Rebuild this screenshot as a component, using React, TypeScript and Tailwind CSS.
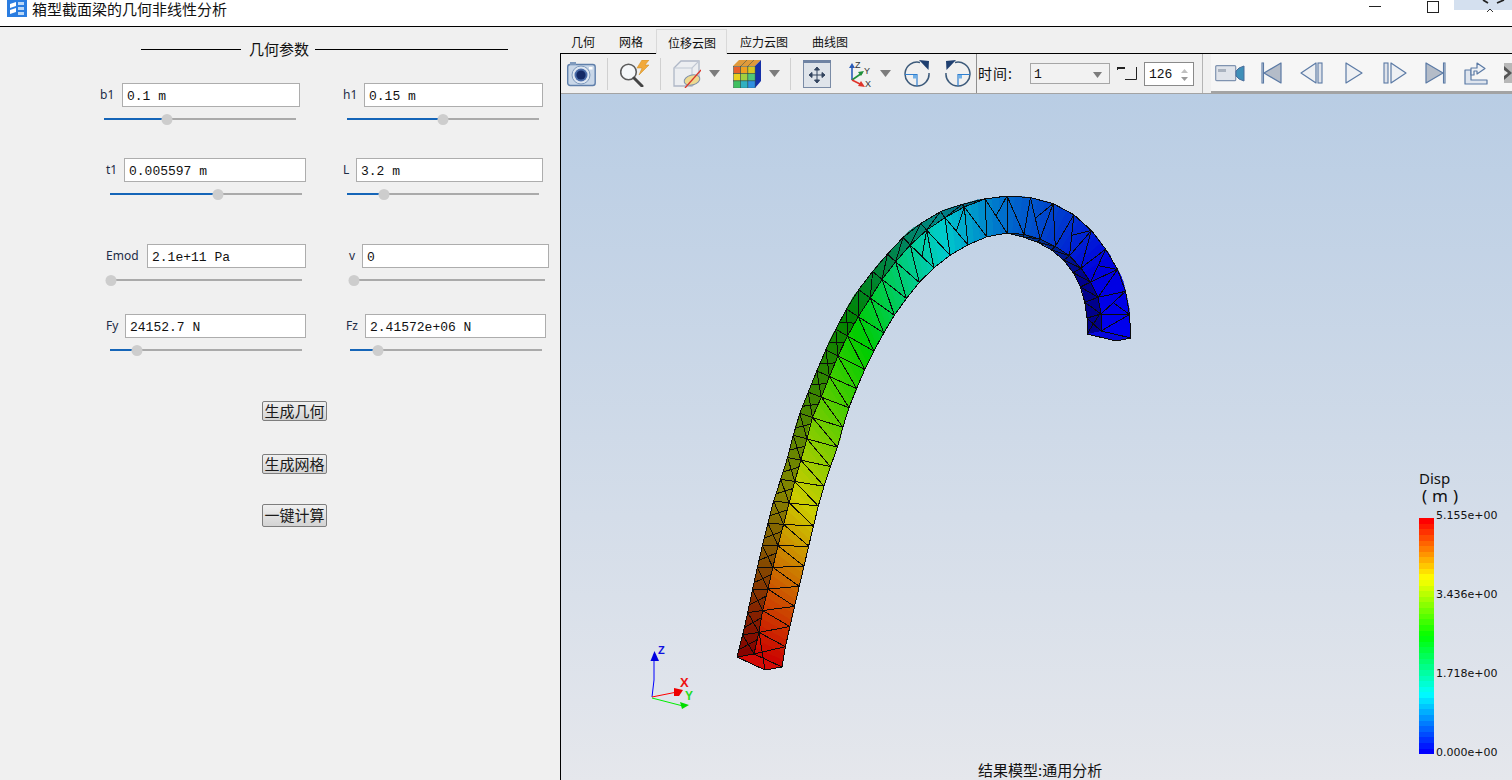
type Pt = [number, number];

// --- beam geometry, traced from the picture (page coordinates) ---
const frontOuterA: Pt[] = [[754,654],[759,632],[763,608],[769,585],[774,562],[780,538],[786,515],[792,492],[798,469],[806,444],[810,423],[819,403],[828,380],[837,358],[847,337],[858,317],[871,297],[883,278],[897,260],[912,243],[928,229],[946,217],[964,207],[985,199],[1007,196]];
const frontOuterB: Pt[] = [[1007,196],[1028,197],[1052,203],[1073,214],[1093,232],[1110,255],[1123,280],[1129,307],[1131,338]];
const frontInnerA: Pt[] = [[782,667],[786,643],[791,622],[796,600],[802,575],[807,553],[813,528],[818,507],[825,483],[832,462],[840,440],[845,418],[853,397],[861,378],[870,358],[881,338],[891,320],[903,303],[915,287],[928,273],[943,260],[958,250],[975,241],[992,235],[1007,233]];
const frontInnerB: Pt[] = [[1007,233],[1030,235],[1050,243],[1073,258],[1088,277],[1098,297],[1101,312],[1101,331]];
const sideLeft: Pt[] = [[737,657],[745,626],[753,587],[763,543],[773,503],[787,460],[792,440],[798,418],[813,380],[830,340],[853,297],[880,262],[910,230],[943,210],[977,200],[1007,196]];
const sideInner: Pt[] = [[1007,233],[1023,237],[1045,245],[1062,258],[1075,275],[1083,293],[1087,313],[1087,334]];

function resample(points: Pt[], n: number): Pt[] {
  const lens = [0];
  for (let i = 1; i < points.length; i++) {
    lens.push(lens[i - 1] + Math.hypot(points[i][0] - points[i - 1][0], points[i][1] - points[i - 1][1]));
  }
  const total = lens[lens.length - 1];
  const out: Pt[] = [];
  for (let k = 0; k <= n; k++) {
    const d = (k / n) * total;
    let i = 1;
    while (i < points.length - 1 && lens[i] < d) i++;
    const f = (d - lens[i - 1]) / (lens[i] - lens[i - 1]);
    out.push([
      points[i - 1][0] + (points[i][0] - points[i - 1][0]) * f,
      points[i - 1][1] + (points[i][1] - points[i - 1][1]) * f,
    ]);
  }
  return out;
}

// blue -> cyan -> green -> yellow -> red
function ramp(u: number, shade = 1) {
  const stops = [[0,0,255],[0,255,255],[0,255,0],[255,255,0],[255,0,0]];
  const x = Math.min(0.9999, Math.max(0, u)) * 4;
  const i = Math.floor(x);
  const f = x - i;
  const c = stops[i].map((v, k) => Math.round((v + (stops[i + 1][k] - v) * f) * shade));
  return `rgb(${c[0]},${c[1]},${c[2]})`;
}

// displacement along the beam is not linear in arc length
const dispStops: Pt[] = [[0,1],[0.22,0.75],[0.46,0.5],[0.64,0.25],[0.735,0.13],[0.9,0],[1,0]];
function dispAt(t: number) {
  let i = 1;
  while (i < dispStops.length - 1 && dispStops[i][0] < t) i++;
  const [t0, u0] = dispStops[i - 1];
  const [t1, u1] = dispStops[i];
  return u0 + ((t - t0) / (t1 - t0)) * (u1 - u0);
}

const CELLS_A = 25;
const CELLS_B = 9;
const CELLS = CELLS_A + CELLS_B;
const SUB = 3;

const fo = [...resample(frontOuterA, CELLS_A * SUB), ...resample(frontOuterB, CELLS_B * SUB).slice(1)];
const fi = [...resample(frontInnerA, CELLS_A * SUB), ...resample(frontInnerB, CELLS_B * SUB).slice(1)];
const sl = resample(sideLeft, CELLS_A * SUB);
const si = resample(sideInner, CELLS_B * SUB);

const poly = (pts: Pt[]) => pts.map((p) => p.join(",")).join(" ");

function Beam() {
  const strips: React.ReactNode[] = [];
  const lines: [Pt, Pt][] = [];
  const total = CELLS * SUB;

  for (let k = 0; k < CELLS_A * SUB; k++) {
    const c = ramp(dispAt((k + 0.5) / total), 0.52);
    strips.push(<polygon key={`s${k}`} points={poly([sl[k], sl[k + 1], fo[k + 1], fo[k]])} fill={c} stroke={c} strokeWidth={0.6} />);
  }
  for (let k = 0; k < CELLS_B * SUB; k++) {
    const c = ramp(dispAt((CELLS_A * SUB + k + 0.5) / total), 0.55);
    const j = CELLS_A * SUB + k;
    strips.push(<polygon key={`i${k}`} points={poly([si[k], si[k + 1], fi[j + 1], fi[j]])} fill={c} stroke={c} strokeWidth={0.6} />);
  }
  for (let k = 0; k < total; k++) {
    const t = (k + 0.5) / total;
    const c = ramp(dispAt(t), t < 0.8 ? 0.8 : 0.8 + (t - 0.8) * 0.7);
    strips.push(<polygon key={`f${k}`} points={poly([fo[k], fo[k + 1], fi[k + 1], fi[k]])} fill={c} stroke={c} strokeWidth={0.6} />);
  }

  for (let n = 0; n < CELLS; n++) {
    const a = n * SUB;
    const b = (n + 1) * SUB;
    lines.push([fo[a], fi[a]], [fo[a], fi[b]], [fo[a], fo[b]], [fi[a], fi[b]]);
    if (n >= 19 && n % 2 === 0) {
      const mid: Pt = [(fo[a][0] + fi[b][0]) / 2, (fo[a][1] + fi[b][1]) / 2];
      lines.push([fo[b], mid]);
    }
  }
  lines.push([fo[total], fi[total]]);
  for (let n = 0; n < CELLS_A; n++) {
    const a = n * SUB;
    const b = (n + 1) * SUB;
    lines.push([sl[a], fo[a]], [sl[a], sl[b]], [sl[b], fo[a]]);
    if (n < 16) lines.push([sl[a + 1], fo[a + 2]]);
  }
  for (let n = 0; n < CELLS_B; n++) {
    const a = n * SUB;
    const b = (n + 1) * SUB;
    const j = CELLS_A * SUB + a;
    lines.push([si[a], fi[j]], [si[a], si[b]], [si[a], fi[j + SUB]]);
  }

  return (
    <svg width={951} height={686} viewBox="561 94 951 686" className="absolute top-0 left-0">
      <g shapeRendering="crispEdges">
        {strips}
        <polygon points="737,657 754,654 782,667 765,670" fill="#d40a06" />
        <polygon points="1087,334 1101,331 1131,338 1116,341" fill="#0606dc" />
      </g>
      <g stroke="#0b0b0b" strokeWidth={1} shapeRendering="crispEdges" fill="none">
        {lines.map(([p, q], i) => (
          <line key={i} x1={p[0]} y1={p[1]} x2={q[0]} y2={q[1]} />
        ))}
        <polyline points="737,657 754,654 782,667 765,670 737,657" />
        <polyline points="759,632 765,670" />
        <polyline points="759,632 754,654" />
        <polyline points="1087,334 1116,341 1131,338" />
        <polyline points="1101,312 1087,334" />
      </g>

      {/* axis triad */}
      <g strokeWidth={1} fill="none">
        <polyline points="652,697 654,680 654,654" stroke="#0000ff" />
        <polygon points="654.5,651 650.5,661 659,661" fill="#0000e0" />
        <line x1={652} y1={697} x2={677} y2={692} stroke="#ff0000" />
        <polygon points="674,688 683,690 679,696 674,696" fill="#ee0000" />
        <line x1={652} y1={698} x2={683} y2={706} stroke="#00ee00" />
        <polygon points="680,702 689,705 682,709" fill="#00dd00" />
      </g>
      <text x={658} y={654} fontSize={11} fontWeight={700} fill="#1010e0" fontFamily="Liberation Sans, sans-serif">Z</text>
      <text x={680} y={687} fontSize={13} fontWeight={700} fill="#ee1111" fontFamily="Liberation Sans, sans-serif">X</text>
      <text x={685} y={700} fontSize={12} fontWeight={700} fill="#22dd22" fontFamily="Liberation Sans, sans-serif">Y</text>
    </svg>
  );
}

function Legend() {
  const bands = Array.from({ length: 42 }, (_, i) => ramp(1 - i / 41));
  return (
    <div className="absolute top-[424px] left-[858px] flex h-[236px] w-[15px] flex-col">
      {bands.map((c, i) => (
        <div key={i} className="flex-1" style={{ background: c }} />
      ))}
    </div>
  );
}

// --- form ---
type FieldProps = {
  label: string;
  value: string;
  className: string;
  inputClass: string;
  sliderClass: string;
  thumb: number;
};

function Field({ label, value, className, inputClass, sliderClass, thumb }: FieldProps) {
  return (
    <div className={className}>
      <div className="flex h-6 items-center justify-between">
        <span className="font-['Noto_Sans','Liberation_Sans',sans-serif] text-[12px] text-[#1d2c46]">{label}</span>
        <div className={`flex h-6 items-center border border-[#adadad] bg-white pt-[3px] pl-[4px] font-['Liberation_Mono',monospace] text-[13px] text-[#111] ${inputClass}`}>
          {value}
        </div>
      </div>
      <div className={`relative mt-[7px] flex h-[10px] items-center ${sliderClass}`}>
        <div className="h-[2px] w-full bg-[#aaaaaa]" />
        <div className="absolute top-[4px] left-0 h-[2px] bg-[#1565b8]" style={{ width: thumb }} />
        <div className="absolute top-0 h-[11px] w-[11px] -translate-x-1/2 rounded-full bg-[#cdcdcd]" style={{ left: thumb }} />
      </div>
    </div>
  );
}

function ActionButton({ children, className }: { children: string; className: string }) {
  return (
    <button className={`ml-[262px] flex w-[65px] items-center justify-center rounded-[2px] border border-[#7d7d7d] bg-linear-to-b from-[#f0f0f0] to-[#d3d3d3] pb-[2px] text-[15px] leading-none text-[#1a1a1a] ${className}`}>
      {children}
    </button>
  );
}

function LeftPanel() {
  return (
    <div className="flex w-[560px] shrink-0 flex-col bg-[#f0f0f0] font-['Noto_Sans_CJK_SC',sans-serif]">
      <div className="mt-[12px] ml-[141px] flex h-[20px] w-[367px] items-center gap-2 text-[15px] text-[#111]">
        <div className="h-px w-[100px] bg-black" />
        <span className="w-[58px] pb-[2px] text-center leading-none whitespace-nowrap">几何参数</span>
        <div className="h-px flex-1 bg-black" />
      </div>

      <div className="mt-[24px] flex">
        <Field label="b1" value="0.1 m" className="ml-[100px] w-[200px]" inputClass="w-[178px]" sliderClass="ml-[4px] w-[192px]" thumb={63} />
        <Field label="h1" value="0.15 m" className="ml-[43px] w-[200px]" inputClass="w-[179px]" sliderClass="ml-[4px] w-[192px]" thumb={96} />
      </div>
      <div className="mt-[34px] flex">
        <Field label="t1" value="0.005597 m" className="ml-[106px] w-[200px]" inputClass="w-[182px]" sliderClass="ml-[4px] w-[192px]" thumb={108} />
        <Field label="L" value="3.2 m" className="ml-[37px] w-[200px]" inputClass="w-[187px]" sliderClass="ml-[4px] w-[192px]" thumb={37} />
      </div>
      <div className="mt-[45px] flex">
        <Field label="Emod" value="2.1e+11 Pa" className="ml-[106px] w-[200px]" inputClass="w-[159px]" sliderClass="ml-[4px] w-[192px]" thumb={1} />
        <Field label="v" value="0" className="ml-[43px] w-[200px]" inputClass="w-[187px]" sliderClass="ml-[0px] w-[196px]" thumb={5} />
      </div>
      <div className="mt-[29px] flex">
        <Field label="Fy" value="24152.7 N" className="ml-[106px] w-[200px]" inputClass="w-[181px]" sliderClass="ml-[4px] w-[192px]" thumb={27} />
        <Field label="Fz" value="2.41572e+06 N" className="ml-[40px] w-[200px]" inputClass="w-[181px]" sliderClass="ml-[4px] w-[192px]" thumb={28} />
      </div>

      <ActionButton className="mt-[46px] h-[20px]">生成几何</ActionButton>
      <ActionButton className="mt-[33px] h-[20px]">生成网格</ActionButton>
      <ActionButton className="mt-[30px] h-[23px]">一键计算</ActionButton>
    </div>
  );
}

// --- toolbar icons ---
const blueLine = "#5b7aa5";

function Caret({ className }: { className: string }) {
  return (
    <svg width={11} height={7} viewBox="0 0 11 7" className={className}>
      <polygon points="0,0 11,0 5.5,7" fill="#7c7c7c" />
    </svg>
  );
}

function Separator({ className }: { className: string }) {
  return <div className={`h-[32px] w-px bg-[#d0d0d0] ${className}`} />;
}

function CameraIcon() {
  return (
    <svg width={29} height={26} viewBox="0 0 29 26" className="ml-[6px]">
      <rect x={0.7} y={3.5} width={27.5} height={21} rx={2.5} fill="#c9d7e8" stroke="#5f7faa" strokeWidth={1.4} />
      <rect x={3} y={1} width={6} height={3} fill="#7f9abd" />
      <rect x={22} y={6} width={3.5} height={2.5} fill="#ffffff" />
      <circle cx={14} cy={14} r={9} fill="#dfe7f1" stroke="#7f9abd" />
      <circle cx={14} cy={14} r={6.5} fill="#4a6ca8" />
      <circle cx={14} cy={14} r={4.6} fill="#152a66" />
    </svg>
  );
}

function SearchBoltIcon() {
  return (
    <svg width={30} height={27} viewBox="0 0 30 27" className="ml-[12px]">
      <circle cx={8.5} cy={12} r={7.8} fill="#f5f7f9" stroke="#5c5c5c" strokeWidth={1.6} />
      <line x1={14} y1={18} x2={22} y2={26} stroke="#444" strokeWidth={3} strokeLinecap="round" />
      <polygon points="22,0 29,0 25,5 29,5 19,15 22,8 17,8" fill="#f2a93a" stroke="#c98a20" strokeWidth={0.5} />
    </svg>
  );
}

function ClipCubeIcon() {
  return (
    <svg width={28} height={28} viewBox="0 0 28 28" className="ml-[12px]">
      <polygon points="1,8 8,1 26,1 26,18 19,26 1,26" fill="#eceef1" stroke="#aeb7c6" strokeWidth={1.3} />
      <polyline points="1,8 19,8 26,1" fill="none" stroke="#c0c7d3" strokeWidth={1.1} />
      <line x1={19} y1={8} x2={19} y2={26} stroke="#c0c7d3" strokeWidth={1.1} />
      <ellipse cx={19} cy={20} rx={8} ry={5} transform="rotate(-15 19 20)" fill="#eed98f" stroke="#7d8fa8" />
      <line x1={12} y1={28} x2={28} y2={10} stroke="#d9352a" strokeWidth={1.3} />
    </svg>
  );
}

function ColorCubeIcon() {
  const rows = [
    ["#e8602a", "#f0a020", "#d8c820"],
    ["#e8d020", "#a0d040", "#50c878"],
    ["#40c060", "#30b0c0", "#3090e0"],
  ];
  return (
    <svg width={28} height={28} viewBox="0 0 28 28" className="ml-[13px]">
      <polygon points="0,6 6,0 28,0 22,6" fill="#e09a3a" />
      <line x1={8} y1={6} x2={14} y2={0} stroke="#2a4a4a" strokeWidth={0.5} />
      <line x1={15} y1={6} x2={21} y2={0} stroke="#2a4a4a" strokeWidth={0.5} />
      <polygon points="22,6 28,0 28,21 22,28" fill="#1530a8" />
      {rows.map((row, r) =>
        row.map((c, i) => (
          <rect key={`${r}${i}`} x={0.5 + i * 7.2} y={6.5 + r * 7.2} width={7.2} height={7.2} fill={c} stroke="#2a4a4a" strokeWidth={0.5} />
        )),
      )}
    </svg>
  );
}

function FitIcon() {
  return (
    <svg width={28} height={28} viewBox="0 0 28 28" className="ml-[12px]">
      <rect x={0.5} y={0.5} width={27} height={27} fill="#dfe4ea" stroke="#7a8ba5" />
      <rect x={0} y={0} width={28} height={3} fill="#6f83a3" />
      <g fill="#33445f" stroke="#33445f" strokeWidth={1}>
        <line x1={14} y1={9} x2={14} y2={21} />
        <line x1={8} y1={15} x2={20} y2={15} />
        <polygon points="14,7 11.5,10 16.5,10" />
        <polygon points="14,23 11.5,20 16.5,20" />
        <polygon points="6,15 9,12.5 9,17.5" />
        <polygon points="22,15 19,12.5 19,17.5" />
      </g>
    </svg>
  );
}

function AxesIcon() {
  return (
    <svg width={27} height={28} viewBox="0 0 27 28" className="ml-[17px]">
      <line x1={4} y1={20} x2={4} y2={6} stroke="#2a5bb8" strokeWidth={1.6} />
      <polygon points="4,3 1,8 7,8" fill="#2a5bb8" />
      <line x1={4} y1={20} x2={14} y2={13} stroke="#1f8f3a" strokeWidth={1.6} />
      <polygon points="16,11 10,12 13,16" fill="#1f8f3a" />
      <line x1={4} y1={20} x2={14} y2={25} stroke="#e0352a" strokeWidth={1.6} />
      <polygon points="17,27 10,26 13,21" fill="#e0352a" />
      <g fontSize={9} fill="#333" fontFamily="Liberation Sans, sans-serif">
        <text x={7} y={8}>Z</text>
        <text x={16} y={14}>Y</text>
        <text x={17} y={27}>X</text>
      </g>
    </svg>
  );
}

function RotateIcon({ flip, className }: { flip?: boolean; className: string }) {
  return (
    <svg width={26} height={27} viewBox="0 0 26 27" className={className}>
      <g transform={flip ? "translate(26 0) scale(-1 1)" : undefined}>
        <path d="M16 2.4 A12 12 0 1 0 25 13" fill="none" stroke="#3c5a7a" strokeWidth={1.5} />
        <polygon points="15,0 25,1 24.5,10" fill="#1f3f70" />
        <path d="M1 14.5 H13 V26" fill="none" stroke="#2f7fd0" strokeWidth={1.2} />
        <rect x={9} y={15} width={3.5} height={3.5} fill="#6fb0e8" />
      </g>
    </svg>
  );
}

function VideoIcon() {
  return (
    <svg width={30} height={17} viewBox="0 0 30 17" className="ml-[4px]">
      <rect x={0.7} y={0.7} width={20} height={15} rx={1} fill="#dfe3ea" stroke="#7f93b0" strokeWidth={1.2} />
      <rect x={3} y={4} width={8} height={3} fill="#a9b2bf" />
      <polygon points="21,6 24,3 29,1 29,16 24,14 21,11" fill="#3f8fb8" stroke="#4d6d9a" />
    </svg>
  );
}

// media buttons share the same outlined, grey-blue look
function MediaIcon({ width, className, tri, bars, fill }: { width: number; className: string; tri: string; bars: [number, number][]; fill: string }) {
  return (
    <svg width={width} height={22} viewBox={`0 0 ${width} 22`} className={className}>
      {bars.map(([x, w], i) => (
        <rect key={i} x={x} y={1} width={w} height={20} fill="#dfe3ea" stroke={blueLine} strokeWidth={1.1} />
      ))}
      <polygon points={tri} fill={fill} stroke={blueLine} strokeWidth={1.2} strokeLinejoin="round" />
    </svg>
  );
}

function ExportIcon() {
  return (
    <svg width={24} height={24} viewBox="0 0 24 24" className="ml-[18px]">
      <path d="M1 9 H7 V19 H23 V23 H1 Z" fill="#dfe5ee" stroke={blueLine} strokeWidth={1.2} strokeLinejoin="round" />
      <path d="M7 14 V7 H13 V2 L21 7.5 L13 13 V10 H10 V14 Z" fill="#eef1f5" stroke={blueLine} strokeWidth={1.2} strokeLinejoin="round" />
    </svg>
  );
}

function Toolbar() {
  return (
    <div className="flex h-10 shrink-0 items-center border-b border-[#a3a3a3] bg-[#f0f0f0] font-['Noto_Sans_CJK_SC',sans-serif]">
      <CameraIcon />
      <Separator className="ml-[11px]" />
      <SearchBoltIcon />
      <Separator className="ml-[10px]" />
      <ClipCubeIcon />
      <Caret className="ml-[8px]" />
      <ColorCubeIcon />
      <Caret className="ml-[8px]" />
      <Separator className="ml-[10px]" />
      <FitIcon />
      <AxesIcon />
      <Caret className="ml-[5px]" />
      <RotateIcon className="ml-[13px]" />
      <RotateIcon flip className="ml-[15px]" />
      <div className="ml-[5px] h-full w-px bg-[#8f8f8f]" />
      <span className="ml-px w-[52px] text-[14px] tracking-[1px] text-[#111]">时间:</span>
      <div className="flex h-[21px] w-[80px] items-center justify-between border border-[#a6a6a6] bg-[#f2f2f2] pt-[2px] pr-[4px] pl-[3px] font-['Liberation_Mono',monospace] text-[13px] text-[#111]">
        1
        <svg width={9} height={6} viewBox="0 0 9 6" className="mr-[3px]"><polygon points="0,0 9,0 4.5,6" fill="#7c7c7c" /></svg>
      </div>
      <svg width={20} height={13} viewBox="0 0 20 13" className="ml-[7px]">
        <path d="M0 1 H8" stroke="#222" strokeWidth={2} />
        <path d="M0.5 1 V3" stroke="#222" strokeWidth={1} />
        <path d="M8 12.5 H19.5 V0" fill="none" stroke="#222" strokeWidth={1} />
      </svg>
      <div className="ml-[7px] flex h-[24px] w-[50px] items-center justify-between border border-[#8a8a8a] bg-white pt-[2px] pr-[5px] pl-[4px] font-['Liberation_Mono',monospace] text-[13px] text-[#111]">
        126
        <svg width={7} height={12} viewBox="0 0 7 12">
          <polygon points="3.5,0 7,4 0,4" fill="#c0c0c0" />
          <polygon points="0,8 7,8 3.5,12" fill="#9a9a9a" />
        </svg>
      </div>
      <div className="ml-[8px] h-full w-px bg-[#b4b4b4]" />
      <div className="ml-[8px] flex h-[39px] flex-1 items-center self-start overflow-hidden border-b-2 border-[#a3a3a3] bg-[#f6f6f6] pt-[1px]">
        <VideoIcon />
        <MediaIcon width={21} className="ml-[16px]" bars={[[1, 1.5]]} tri="20,1 20,21 3,11" fill="#b4bcc8" />
        <MediaIcon width={24} className="ml-[18px]" bars={[[18, 4]]} tri="16,1 16,21 1,11" fill="#eef0f3" />
        <MediaIcon width={18} className="ml-[21px]" bars={[]} tri="1,1 1,21 17,11" fill="#eef0f3" />
        <MediaIcon width={24} className="ml-[20px]" bars={[[1, 4]]} tri="8,1 8,21 23,11" fill="#eef0f3" />
        <MediaIcon width={21} className="ml-[18px]" bars={[[18.5, 1.5]]} tri="1,1 1,21 18,11" fill="#b4bcc8" />
        <ExportIcon />
        <svg width={8} height={20} viewBox="0 0 8 20" className="ml-[16px] shrink-0">
          <rect width={8} height={20} fill="#b8b8b8" />
          <polygon points="0,3 8,10 0,17" fill="#555" />
          <polygon points="0,7 4,10 0,13" fill="#e8e8e8" />
        </svg>
      </div>
    </div>
  );
}

function TitleBar() {
  return (
    <div className="relative flex h-[27px] shrink-0 items-start border-b border-black bg-white">
      <svg width={20} height={17} viewBox="0 0 20 17" className="ml-[7px]">
        <rect width={20} height={17} fill="#2a7de1" />
        <path d="M3 4 L9 2 L9 6 L3 8 Z M3 10 L9 8 L9 12 L3 14 Z" fill="#ffffff" />
        <path d="M11 2 H17 V5 H11 Z M11 7 H17 V10 H11 Z M11 12 H17 V15 H11 Z" fill="#bcd8f6" />
      </svg>
      <span className="ml-[5px] w-[196px] font-['Noto_Sans_CJK_SC',sans-serif] text-[15px] leading-[17px] whitespace-nowrap text-[#111]">箱型截面梁的几何非线性分析</span>
      <div className="mt-[6px] ml-[1141px] h-px w-[12px] bg-[#222]" />
      <div className="mt-px ml-[46px] h-[12px] w-[12px] border border-[#222]" />
      <div className="ml-[15px] h-[10px] w-[58px] bg-[#d4e0ef]" />
      <svg width={24} height={14} viewBox="0 0 24 14" className="absolute top-0 left-[1482px]">
        <path d="M1 0 L6 3 M22 0 L15 3" stroke="#222" strokeWidth={1.8} fill="none" />
        <path d="M5 12 L8 9 L11 12" stroke="#333" strokeWidth={1} fill="none" />
      </svg>
    </div>
  );
}

const tabs = ["几何", "网格", "位移云图", "应力云图", "曲线图"];

function Tabs() {
  return (
    <div className="-ml-px flex h-[26px] shrink-0 items-end font-['Noto_Sans_CJK_SC',sans-serif] text-[12px] text-[#111]">
      {tabs.map((t) =>
        t === "位移云图" ? (
          <div key={t} className="relative z-10 mr-px ml-px -mb-px flex h-[25px] items-center border border-b-0 border-[#d9d9d9] bg-[#f0f0f0] pt-[2px] pr-[10px] pl-[11px]">
            {t}
          </div>
        ) : (
          <div key={t} className="flex h-[24px] items-center px-3 pt-[2px]">
            {t}
          </div>
        ),
      )}
    </div>
  );
}

export default function App() {
  return (
    <div className="flex h-[780px] w-[1512px] flex-col overflow-hidden bg-[#f0f0f0]">
      <TitleBar />
      <div className="flex min-h-0 flex-1">
        <LeftPanel />
        <div className="flex min-w-0 flex-1 flex-col">
          <Tabs />
          <div className="flex min-h-0 flex-1 flex-col border-t border-l border-black">
            <Toolbar />
            <div className="relative flex-1 bg-linear-to-b from-[#b9cde4] to-[#e5e7ec]">
              <Beam />
              <Legend />
              {/* legend captions and model label sit on the 3D canvas */}
              <div className="absolute top-[376px] left-[858px] font-['Noto_Sans','Liberation_Sans',sans-serif] text-[15px] leading-[17px] text-[#111]">
                Disp
                <div className="flex gap-[5px] pl-[3px] text-[17px] leading-[17px]">
                  <span>(</span>
                  <span>m</span>
                  <span>)</span>
                </div>
              </div>
              {[
                { v: "5.155e+00", top: "top-[415px]" },
                { v: "3.436e+00", top: "top-[494px]" },
                { v: "1.718e+00", top: "top-[573px]" },
                { v: "0.000e+00", top: "top-[652px]" },
              ].map((l) => (
                <span key={l.v} className={`absolute left-[875px] font-['DejaVu_Sans',sans-serif] text-[11px] leading-[14px] text-[#111] ${l.top}`}>
                  {l.v}
                </span>
              ))}
              <span className="absolute top-[666px] left-[417px] font-['Noto_Sans_CJK_SC',sans-serif] text-[15px] leading-[20px] text-[#111]">
                结果模型:通用分析
              </span>
            </div>
          </div>
        </div>
      </div>
    </div>
  );
}
